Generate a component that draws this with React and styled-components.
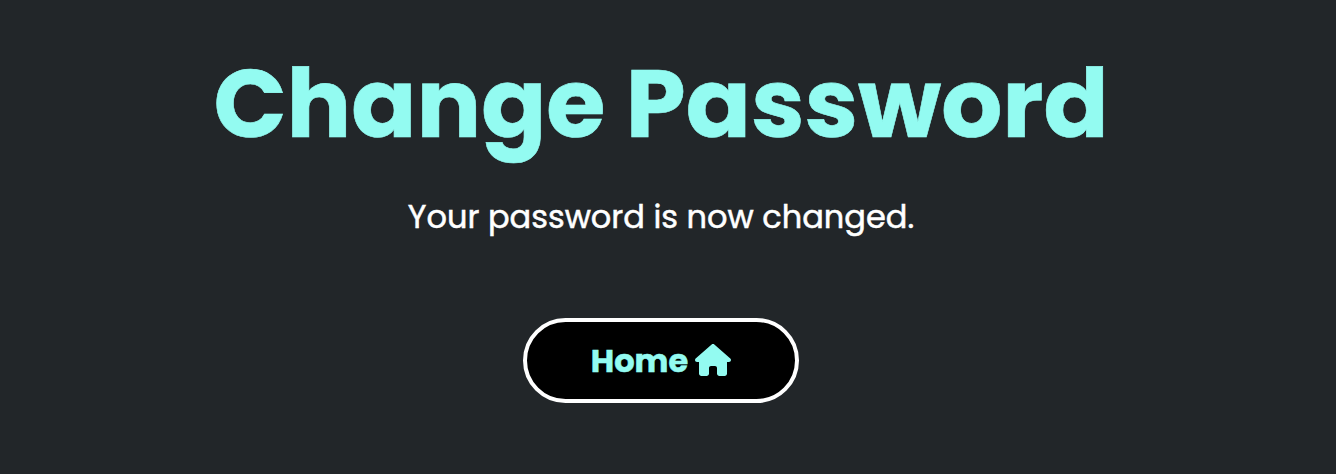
import React from "react";
import styled, { createGlobalStyle } from "styled-components";
import { FaHouse } from "react-icons/fa6";

const GlobalStyle = createGlobalStyle`
  * { box-sizing: border-box; }
  body {
    margin: 0;
    background: #222629;
    font-family: Poppins, Inter, "Liberation Sans", sans-serif;
  }
`;

const Page = styled.main`
  min-height: 474px;
  padding: 47px 14px 0 0;
  display: flex;
  flex-direction: column;
  align-items: center;
  background: #222629;
`;

const Title = styled.h1`
  margin: 0;
  height: 120px;
  line-height: 114px;
  font-size: 96px;
  font-weight: 700;
  white-space: nowrap;
  color: #93fbf1;
  -webkit-text-stroke: 0.6px #93fbf1;
`;

const Message = styled.p`
  margin: 26px 0 0;
  line-height: 48px;
  font-size: 32px;
  font-weight: 400;
  white-space: nowrap;
  color: #fff;
  -webkit-text-stroke: 0.5px #fff;
`;

const HomeButton = styled.button`
  margin-top: 77px;
  width: 276px;
  height: 85px;
  display: flex;
  align-items: center;
  justify-content: center;
  gap: 7px;
  padding: 0;
  border: 4px solid #fff;
  border-radius: 43px;
  background: #000;
  color: #93fbf1;
  font-family: inherit;
  font-size: 32px;
  font-weight: 700;
  line-height: 48px;
`;

const Label = styled.span`
  -webkit-text-stroke: 0.5px #93fbf1;
`;

const HomeIcon = styled(FaHouse)`
  width: 36px;
  height: 32px;
  margin-bottom: 2px;
`;

export default function App() {
  return (
    <>
      <GlobalStyle />
      <Page>
        <Title>Change Password</Title>
        <Message>Your password is now changed.</Message>
        <HomeButton type="button">
          <Label>Home</Label>
          <HomeIcon />
        </HomeButton>
      </Page>
    </>
  );
}
